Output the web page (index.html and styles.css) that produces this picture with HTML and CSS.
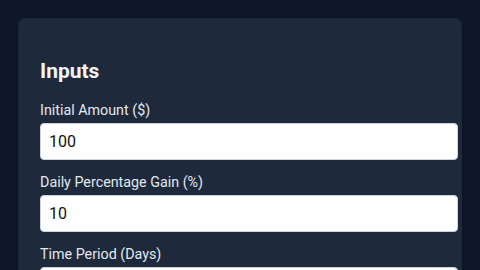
FILE: index.html
```html
<!DOCTYPE html>
<html lang="en">
<head>
<meta charset="utf-8">
<title>Inputs</title>
<link rel="stylesheet" href="styles.css">
</head>
<body>
  <main class="page">
    <section class="card">
      <h2 class="card-title">Inputs</h2>
      <div class="field">
        <label class="field-label" for="amount">Initial Amount ($)</label>
        <input class="field-input" id="amount" type="text" value="100">
      </div>
      <div class="field">
        <label class="field-label" for="gain">Daily Percentage Gain (%)</label>
        <input class="field-input" id="gain" type="text" value="10">
      </div>
      <div class="field">
        <label class="field-label" for="days">Time Period (Days)</label>
        <input class="field-input" id="days" type="text" value="30">
      </div>
    </section>
  </main>
</body>
</html>
```

FILE: styles.css
```css
html, body {
  margin: 0;
  padding: 0;
  height: 100%;
  overflow: hidden;
}
body {
  background: #0f172a;
  font-family: Roboto, "Liberation Sans", sans-serif;
  color: #e2e8f0;
}
.page {
  padding: 18px;
}
.card {
  background: #1e293b;
  border-radius: 8px;
  padding: 22px;
  box-shadow: 0 4px 10px rgba(0, 0, 0, 0.25);
}
.card-title {
  margin: 17px 0 15px;
  font-size: 21px;
  line-height: 28px;
  font-weight: 700;
  color: #f1f5f9;
}
.field {
  margin-bottom: 12px;
}
.field-label {
  display: block;
  font-size: 14.3px;
  line-height: 20px;
  margin-bottom: 3px;
  color: #e2e8f0;
}
.field-input {
  display: block;
  box-sizing: content-box;
  width: 100%;
  margin: 0;
  padding: 8px;
  border: 1px solid #cbd5e1;
  border-radius: 4px;
  background: #ffffff;
  font-family: Roboto, "Liberation Sans", sans-serif;
  font-size: 16px;
  line-height: 19px;
  height: 19px;
  color: #111111;
  outline: none;
}
```
